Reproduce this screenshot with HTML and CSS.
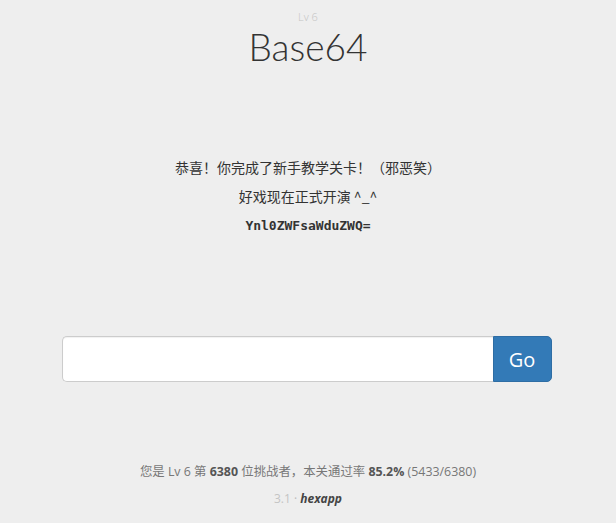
FILE: index.html
```html
<!DOCTYPE html>
<html lang="zh">
<head>
<meta charset="utf-8">
<link rel="stylesheet" href="styles.css">
</head>
<body>
<div class="page">
  <header class="head">
    <div class="lv">Lv 6</div>
    <h1 class="title">Base64</h1>
  </header>
  <section class="msg">
    <p>恭喜！你完成了新手教学关卡！（邪恶笑）</p>
    <p>好戏现在正式开演 ^_^</p>
    <p class="code">Ynl0ZWFsaWduZWQ=</p>
  </section>
  <form class="answer">
    <input class="field" type="text">
    <button class="go" type="button">Go</button>
  </form>
  <footer class="foot">
    <p class="stats">您是 Lv 6 第 <b>6380</b> 位挑战者，本关通过率 <b>85.2%</b> (5433/6380)</p>
    <p class="brand"><span class="ver">3.1</span> · <span class="app">hexapp</span></p>
  </footer>
</div>
</body>
</html>
```
FILE: styles.css
```css
html, body {
  margin: 0;
  padding: 0;
  background: #eeeeee;
}
body {
  font-family: "Open Sans", "Noto Sans CJK SC", sans-serif;
  color: #333;
}
.page {
  width: 616px;
  height: 523px;
  display: flex;
  flex-direction: column;
  align-items: center;
}
.head {
  display: flex;
  flex-direction: column;
  align-items: center;
  padding-top: 10px;
}
.lv {
  font-size: 11px;
  color: #c4c4c4;
  line-height: 14px;
  font-weight: 300;
}
.title {
  margin: 2px 0 0;
  font-family: Lato, sans-serif;
  font-size: 37px;
  font-weight: 300;
  line-height: 42px;
  color: #333;
}
.msg {
  margin-top: 89px;
  display: flex;
  flex-direction: column;
  align-items: center;
  gap: 9px;
}
.msg p {
  margin: 0;
  font-size: 14px;
  line-height: 20px;
  color: #333;
  font-family: "Noto Sans CJK SC", sans-serif;
}
.msg .code {
  font-family: "DejaVu Sans Mono", monospace;
  font-weight: bold;
  font-size: 13px;
  margin-top: 1px;
}
.answer {
  margin-top: 100px;
  margin-left: -3px;
  display: flex;
  width: 490px;
  height: 46px;
}
.field {
  flex: 1;
  border: 1px solid #cccccc;
  border-right: none;
  border-radius: 5px 0 0 5px;
  background: #fff;
  margin: 0;
  padding: 0 12px;
  box-shadow: inset 0 1px 1px rgba(0,0,0,0.06);
}
.go {
  width: 59px;
  border: 1px solid #2e6da4;
  background: #337ab7;
  color: #fff;
  font-family: "Open Sans", sans-serif;
  font-size: 20px;
  border-radius: 0 5px 5px 0;
  margin: 0;
  padding: 0;
}
.foot {
  margin-top: 81px;
  display: flex;
  flex-direction: column;
  align-items: center;
  gap: 9px;
}
.foot p {
  margin: 0;
  font-size: 12px;
  line-height: 18px;
}
.stats {
  color: #777;
  font-size: 12.4px !important;
  font-family: "Open Sans", "Noto Sans CJK SC", sans-serif;
}
.stats b {
  color: #555;
  font-weight: 700;
}
.brand {
  color: #bbb;
}
.ver {
  color: #c4c4c4;
}
.app {
  color: #444;
  font-weight: 700;
  font-style: italic;
}
```
